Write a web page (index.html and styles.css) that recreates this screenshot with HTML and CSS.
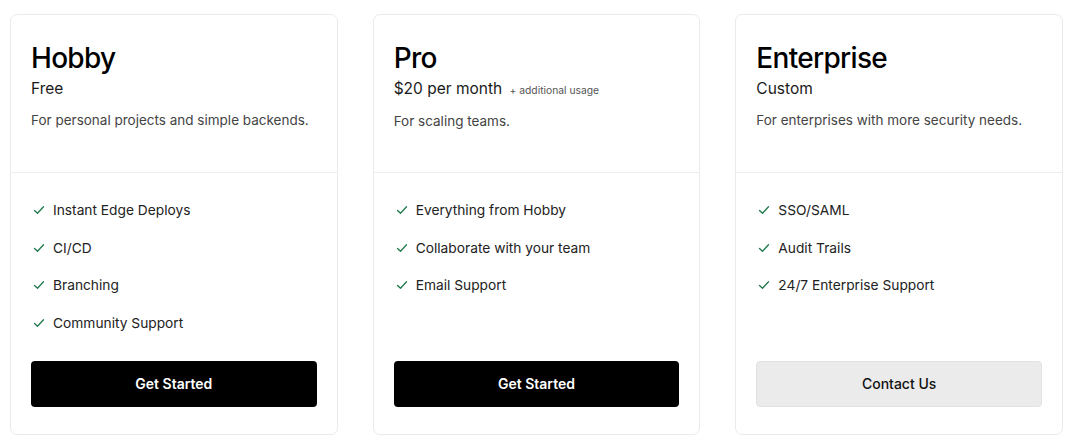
FILE: index.html
```html
<!DOCTYPE html>
<html>
<head>
<meta charset="utf-8">
<link rel="stylesheet" href="styles.css">
</head>
<body>
<div class="plans">
  <div class="card">
    <div class="head">
      <h2 class="title">Hobby</h2>
      <div class="price">Free</div>
      <p class="desc">For personal projects and simple backends.</p>
    </div>
    <div class="body">
      <ul class="features">
        <li><svg class="check" viewBox="0 0 12 12"><path d="M1.5 6.5 L4.5 9.3 L10.5 2.8"/></svg>Instant Edge Deploys</li>
        <li><svg class="check" viewBox="0 0 12 12"><path d="M1.5 6.5 L4.5 9.3 L10.5 2.8"/></svg>CI/CD</li>
        <li><svg class="check" viewBox="0 0 12 12"><path d="M1.5 6.5 L4.5 9.3 L10.5 2.8"/></svg>Branching</li>
        <li><svg class="check" viewBox="0 0 12 12"><path d="M1.5 6.5 L4.5 9.3 L10.5 2.8"/></svg>Community Support</li>
      </ul>
      <button class="btn btn-dark">Get Started</button>
    </div>
  </div>
  <div class="card">
    <div class="head">
      <h2 class="title">Pro</h2>
      <div class="price">$20 per month <span class="extra">+ additional usage</span></div>
      <p class="desc">For scaling teams.</p>
    </div>
    <div class="body">
      <ul class="features">
        <li><svg class="check" viewBox="0 0 12 12"><path d="M1.5 6.5 L4.5 9.3 L10.5 2.8"/></svg>Everything from Hobby</li>
        <li><svg class="check" viewBox="0 0 12 12"><path d="M1.5 6.5 L4.5 9.3 L10.5 2.8"/></svg>Collaborate with your team</li>
        <li><svg class="check" viewBox="0 0 12 12"><path d="M1.5 6.5 L4.5 9.3 L10.5 2.8"/></svg>Email Support</li>
      </ul>
      <button class="btn btn-dark">Get Started</button>
    </div>
  </div>
  <div class="card">
    <div class="head">
      <h2 class="title">Enterprise</h2>
      <div class="price">Custom</div>
      <p class="desc">For enterprises with more security needs.</p>
    </div>
    <div class="body">
      <ul class="features">
        <li><svg class="check" viewBox="0 0 12 12"><path d="M1.5 6.5 L4.5 9.3 L10.5 2.8"/></svg>SSO/SAML</li>
        <li><svg class="check" viewBox="0 0 12 12"><path d="M1.5 6.5 L4.5 9.3 L10.5 2.8"/></svg>Audit Trails</li>
        <li><svg class="check" viewBox="0 0 12 12"><path d="M1.5 6.5 L4.5 9.3 L10.5 2.8"/></svg>24/7 Enterprise Support</li>
      </ul>
      <button class="btn btn-light">Contact Us</button>
    </div>
  </div>
</div>
</body>
</html>
```
FILE: styles.css
```css
* { box-sizing: border-box; }
html, body { margin: 0; padding: 0; background: #fff; }
body {
  font-family: Inter, "Noto Sans", "Liberation Sans", sans-serif;
  color: #111;
}
.plans {
  display: grid;
  grid-template-columns: repeat(3, 1fr);
  gap: 35px;
  padding: 14px 7px 0 10px;
}
.card {
  border: 1px solid #ebebeb;
  border-radius: 7px;
  height: 421px;
  display: flex;
  flex-direction: column;
  background: #fff;
}
.head {
  padding: 26px 20px 0 20px;
  height: 158px;
  border-bottom: 1px solid #eeeeee;
}
.title {
  margin: 0;
  font-size: 28px;
  line-height: 34px;
  font-weight: 500;
  letter-spacing: -0.025em;
  color: #000;
}
.price {
  margin-top: 2px;
  font-size: 15.5px;
  line-height: 24px;
  color: #1a1a1a;
}
.extra {
  font-size: 10.3px;
  color: #555;
  margin-left: 3px;
}
.desc {
  margin: 9px 0 0 0;
  font-size: 13.5px;
  line-height: 20px;
  color: #444;
}
.body {
  flex: 1;
  display: flex;
  flex-direction: column;
  padding: 27px 20px 27px 20px;
}
.features {
  list-style: none;
  margin: 0;
  padding: 0;
  display: flex;
  flex-direction: column;
  gap: 17.6px;
}
.features li {
  display: flex;
  align-items: center;
  font-size: 13.75px;
  line-height: 20px;
  color: #222;
}
.check {
  width: 12px;
  height: 12px;
  margin-left: 2px;
  margin-right: 8px;
  fill: none;
  stroke: #1f7a4d;
  stroke-width: 1.3;
  stroke-linecap: round;
  stroke-linejoin: round;
}
.btn {
  margin-top: auto;
  height: 46px;
  width: 100%;
  border-radius: 4px;
  font-family: inherit;
  font-size: 14px;
  font-weight: 600;
  line-height: 44px;
  padding: 0;
  cursor: pointer;
}
.btn-dark {
  background: #000;
  color: #fff;
  border: none;
}
.btn-light {
  background: #ebebeb;
  color: #111;
  border: 1px solid #e2e2e2;
  font-weight: 500;
}
```
